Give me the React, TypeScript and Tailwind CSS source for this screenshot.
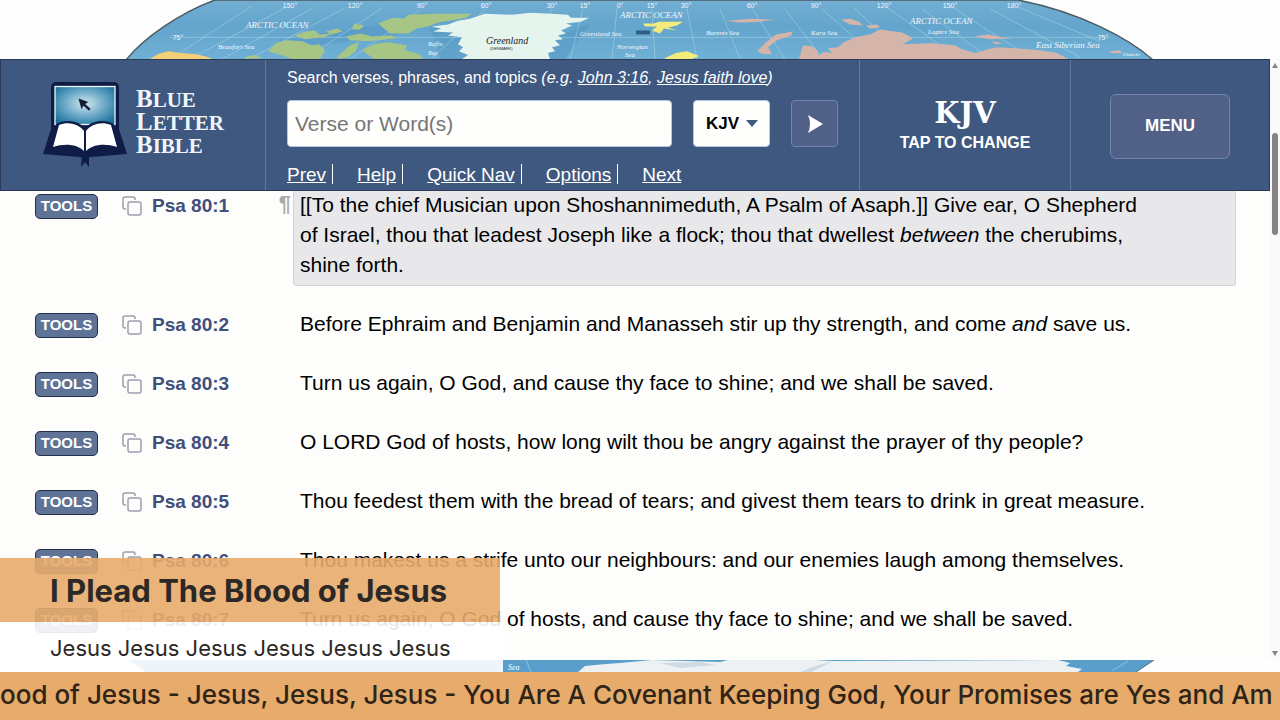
import { ReactNode } from 'react'

interface Verse { num: number; text: ReactNode; active?: boolean }

const VERSES: Verse[] = [
  { num: 1, active: true, text: <>[[To the chief Musician upon Shoshannimeduth, A Psalm of Asaph.]] Give ear, O Shepherd of Israel, thou that leadest Joseph like a flock; thou that dwellest <em>between</em> the cherubims, shine forth.</> },
  { num: 2, text: <>Before Ephraim and Benjamin and Manasseh stir up thy strength, and come <em>and</em> save us.</> },
  { num: 3, text: 'Turn us again, O God, and cause thy face to shine; and we shall be saved.' },
  { num: 4, text: 'O LORD God of hosts, how long wilt thou be angry against the prayer of thy people?' },
  { num: 5, text: 'Thou feedest them with the bread of tears; and givest them tears to drink in great measure.' },
  { num: 6, text: 'Thou makest us a strife unto our neighbours: and our enemies laugh among themselves.' },
  { num: 7, text: 'Turn us again, O God of hosts, and cause thy face to shine; and we shall be saved.' },
]

const NAV = ['Prev', 'Help', 'Quick Nav', 'Options', 'Next']

const DEGREES: [number, string][] = [
  [290, '150°'], [355, '120°'], [422, '90°'], [486, '60°'], [552, '30°'], [585, '15°'], [620, '0°'],
  [652, '15°'], [686, '30°'], [752, '60°'], [816, '90°'], [884, '120°'], [950, '150°'], [1014, '180°'],
]

const SEAS: [number, number, string, number][] = [
  [246, 28, 'ARCTIC   OCEAN', 9], [620, 18, 'ARCTIC   OCEAN', 9], [910, 24, 'ARCTIC   OCEAN', 9],
  [218, 50, 'Beaufort Sea', 7], [428, 47, 'Baffin', 6], [428, 56, 'Bay', 6], [580, 37, 'Greenland  Sea', 7],
  [617, 50, 'Norwegian', 7], [625, 58, 'Sea', 7], [706, 36, 'Barents Sea', 7], [811, 36, 'Kara Sea', 7],
  [928, 35, 'Laptev Sea', 7], [1036, 49, 'East Siberian Sea', 9], [1123, 57, 'Chukchi', 5],
]

const MERIDIANS = [
  'M252 6L128 88', 'M285 8L150 82', 'M313 8L184 82', 'M345 8L222 75', 'M382 8L290 70', 'M420 10L350 60', 'M486 9L420 70',
  'M552 9L530 60', 'M583 9L570 60', 'M617 8L612 60', 'M652 9L655 60', 'M687 9L697 60', 'M720 9L740 60', 'M752 9L785 60',
  'M785 9L823 60', 'M822 9L853 37', 'M854 8L900 52', 'M885 6L940 46', 'M922 9L985 56', 'M950 6L1030 58', 'M990 9L1080 58', 'M1018 7L1100 42',
]

function WorldMapTop() {
  return (
    <svg viewBox="0 0 1280 60" preserveAspectRatio="none" className="block h-full w-full" aria-hidden="true">
      <defs>
        <clipPath id="globe"><path d="M215 0C182 12 144 38 126 61H1153C1130 40 1080 12 1018 0Z" /></clipPath>
        <linearGradient id="ocean" x1="0" y1="0" x2="0" y2="1">
          <stop offset="0" stopColor="#72aed2" /><stop offset="0.45" stopColor="#64a5cd" /><stop offset="1" stopColor="#70b0d5" />
        </linearGradient>
      </defs>
      <g clipPath="url(#globe)">
        <path fill="url(#ocean)" d="M0 0H1280V60H0Z" />
        <path fill="#4e91bd" opacity=".4" d="M430 30L470 20 500 60H440ZM555 38L590 24 565 60H545ZM280 40L430 18 400 34 280 52Z" />
        <path fill="none" stroke="#b5d7ea" strokeWidth=".7" opacity=".7" d={MERIDIANS.join('') + 'M170 38H1110'} />
        <path fill="#f4cf78" d="M150 60L158 55 168 52 181 54 195 55 208 58 212 60Z" />
        <path fill="#a7c585" d="M268 52L276 44 286 41 302 42 312 46 319 45 325 51 320 60H292L284 57ZM362 51L374 45 388 43 407 46 405 51 419 55 423 60H374ZM295 36L305 32 315 31 319 35 333 34 324 38 305 40ZM326 32L337 29 343 32 331 35ZM346 37L361 34 372 37 391 36 397 39 368 42 350 41ZM354 24L364 26 360 30 352 30ZM378 24L393 18 404 19 408 15 438 14 472 14 466 18 438 23 428 27 417 29 408 34 390 34ZM338 57L350 46 359 43 356 52 348 58 338 60ZM245 58L255 56 262 59 245 60Z" />
        <path fill="#e6f4ee" d="M470 19L485 14 512 15 530 13 551 14 568 15 571 18 589 18 581 22 566 24 572 26 561 31 566 34 558 36 563 40 555 41 560 46 552 48 555 52 548 54 550 60H462L468 56 459 52 463 48 458 45 462 38 448 36 453 33 433 32 441 29 432 27 448 25 458 21Z" />
        <path fill="#f3ec7a" d="M643 24L654 24 659 22 683 22 677 26 668 28 677 31 664 29 660 34 652 31 657 27 645 27ZM665 59L676 54 687 52 699 57 692 60H665Z" />
        <path fill="#d5b5a9" d="M757 52L766 43 776 35 793 32 791 36 777 41 768 48 772 55 763 55ZM799 60L803 46 812 47 817 51 820 60ZM818 57L824 53 832 54 828 49 838 48 844 43 855 38 870 35 880 30 902 33 913 39 903 45 932 44 955 46 962 50 975 54 996 48 1015 49 1040 51 1057 54 1068 60H818ZM841 20L850 19 859 22 863 26 850 25ZM866 26L877 25 880 28 870 29ZM974 37L988 35 1002 38 1012 39 990 40ZM992 42L1004 44 995 45ZM1109 52L1120 51 1122 54 1112 54ZM726 21L740 20 750 19 775 20 760 22 740 23Z" />
        <path fill="#2f5f80" d="M636 31H650V35H636Z" />
        <g fill="#eef8fc" fontFamily="Liberation Sans" fontSize="7" textAnchor="middle">
          {DEGREES.map(([x, label]) => <text key={x} x={x} y="8">{label}</text>)}
          <text x="178" y="41">75°</text>
          <text x="1103" y="41">75°</text>
        </g>
        <g fill="#f2f8fb" fontFamily="Liberation Serif" fontStyle="italic">
          {SEAS.map(([x, y, label, size], i) => (
            <text key={i} x={x} y={y} fontSize={size}>{label}</text>
          ))}
        </g>
        <text x="486" y="45" fontFamily="Liberation Serif" fontStyle="italic" fontSize="10" fill="#222">Greenland</text>
        <text x="490" y="51" fontFamily="Liberation Sans" fontSize="4" fill="#222">(DENMARK)</text>
      </g>
      <path fill="none" stroke="#4c5a62" strokeWidth="1.4" d="M126 61C144 38 182 12 215 0H1018C1080 12 1130 40 1153 61" />
    </svg>
  )
}

function WorldMapBottom() {
  return (
    <svg viewBox="0 0 1280 12" preserveAspectRatio="none" className="block h-full w-full" aria-hidden="true">
      <path fill="#5a9fcb" d="M128 0H1154L1136 12H146Z" />
      <path fill="#edf1f4" d="M578 12L585 6 606 4 620 3 652 0 720 2 728 0H815L832 1 1058 0 1070 3 1066 6 1082 9 1078 12Z" />
      <path fill="#cfdbe4" d="M800 12L812 7 826 3 832 1 820 8 811 12ZM660 3L700 2 716 5 680 8Z" />
      <path stroke="#a5cde2" strokeWidth=".7" d="M526 0L531 12M1112 11L1128 1" />
      <path stroke="#4c6a7d" d="M1154 0L1136 12" />
      <text x="508" y="10" fontFamily="Liberation Serif" fontStyle="italic" fontSize="8" fill="#fff">Sea</text>
    </svg>
  )
}

function LogoMark() {
  return (
    <svg viewBox="0 0 84 86" className="h-[86px] w-[84px] shrink-0" aria-hidden="true">
      <defs>
        <radialGradient id="screen" cx=".5" cy=".45" r=".65">
          <stop offset="0" stopColor="#d4e8f0" /><stop offset=".5" stopColor="#6fabc9" /><stop offset="1" stopColor="#16709b" />
        </radialGradient>
      </defs>
      <rect x="8" y="0" width="68" height="52" rx="5" fill="#0f1c45" />
      <path fill="#0f1c45" d="M9 44H75L84 72 48 75 42 76 36 75 0 72Z" />
      <path fill="#0f1c45" d="M39 72H46V85L42 80 38 85Z" />
      <rect x="12" y="4.500" width="60" height="38" fill="url(#screen)" stroke="#eef6fa" strokeWidth="1.300" />
      <path fill="#0f1c45" d="M13 42C22 37 35 38 42 46C49 38 62 37 71 42L74 66H10Z" />
      <path fill="#fff" d="M16 43C25 39 36 42 41 49V69C34 62 22 61 10 65Z" />
      <path fill="#fff" d="M68 43C59 39 48 42 43 49V69C50 62 62 61 74 65Z" />
      <path fill="#111b33" stroke="#c8e0ea" strokeWidth=".5" d="M35 16L46 20 42.500 22 48 27 46 29 40.500 24 38.500 28Z" />
    </svg>
  )
}

function CopyIcon() {
  return (
    <svg viewBox="0 0 20 20" className="h-5 w-5" fill="none" stroke="#9b9fae" strokeWidth="1.500" aria-hidden="true">
      <path d="M4 13H3A2 2 0 0 1 1 11V3A2 2 0 0 1 3 1H11A2 2 0 0 1 13 3V4" />
      <rect x="6" y="6" width="13" height="13" rx="2" />
    </svg>
  )
}

function LogoWord({ word }: { word: string }) {
  return (
    <span className="block h-[23px] text-[25px] leading-[23px]">
      {word[0]}<span className="text-[21px] leading-none">{word.slice(1)}</span>
    </span>
  )
}

function Header() {
  return (
    <header className="relative grid h-[132px] shrink-0 grid-cols-[264px_1fr_211px_199px] border border-[#2c3a55] bg-[#3f587f] text-white">
      <a href="#home" className="flex items-center pl-[42px]">
        <LogoMark />
        <span className="pb-2 pl-[9px] font-['Liberation_Serif',serif] font-bold text-[#f0f5fb]">
          <LogoWord word="BLUE" />
          <LogoWord word="LETTER" />
          <LogoWord word="BIBLE" />
        </span>
      </a>

      <form className="flex flex-col border-l border-[#647ba1] pl-[21px]" onSubmit={e => e.preventDefault()}>
        <label htmlFor="search" className="mt-1.5 text-[16px] leading-6 whitespace-nowrap">
          Search verses, phrases, and topics <em>(e.g. <a href="#john" className="underline">John 3:16</a>, <a href="#faith" className="underline">Jesus faith love</a>)</em>
        </label>
        <div className="mt-2.5 flex">
          <input id="search" placeholder="Verse or Word(s)" className="h-[47px] w-[385px] rounded border border-[#b9c6e0] bg-[#fefefd] px-[7px] text-[21px] text-black placeholder:text-[#767676]" />
          <div className="relative ml-[21px]">
            <select aria-label="Translation" className="h-[47px] w-[77px] appearance-none rounded border border-[#b9c6e0] bg-[#fefefd] pl-3 text-[17px] font-bold text-black">
              <option>KJV</option>
            </select>
            <svg viewBox="0 0 12 7" className="pointer-events-none absolute top-5 right-3 h-[7px] w-3" aria-hidden="true"><path fill="#3f587f" d="M0 0H12L6 7Z" /></svg>
          </div>
          <button aria-label="Search" className="ml-[21px] flex h-[47px] w-[47px] items-center justify-center rounded border border-[#7485ac] bg-[#506087]">
            <svg viewBox="0 0 16 18" className="h-[18px] w-4" aria-hidden="true"><path fill="#fff" d="M1 0L16 9 1 18Q5 9 1 0Z" /></svg>
          </button>
        </div>
        <nav className="mt-[17px] flex text-[19px] leading-[22px]">
          {NAV.map((item, i) => (
            <span key={item} className="mr-6 flex">
              <a href={'#' + item} className="underline">{item}</a>
              {i < NAV.length - 1 && <span className="ml-1.5 h-5 w-px bg-white" />}
            </span>
          ))}
        </nav>
      </form>

      <button className="flex flex-col items-center justify-center border-l border-[#647ba1] pt-1">
        <span className="font-['DejaVu_Serif',serif] text-[29px] leading-8 font-bold">KJV</span>
        <span className="text-[16px] leading-7 font-bold">TAP TO CHANGE</span>
      </button>

      <div className="flex items-center justify-center border-l border-[#647ba1] pt-0.5">
        <button className="h-[65px] w-[120px] rounded-md border border-[#7485ac] bg-[#506087] text-[17px] font-bold">MENU</button>
      </div>
    </header>
  )
}

function VerseRow({ verse }: { verse: Verse }) {
  return (
    <div className="flex items-start">
      <div className="flex h-8 w-[293px] shrink-0 items-center pl-[35px]">
        <button className="h-[25px] w-[63px] rounded-[5px] border border-[#25304d] bg-[#5f7396] text-[15px] leading-5 font-bold text-white">TOOLS</button>
        <button aria-label="Copy verse" className="ml-6"><CopyIcon /></button>
        <a href={'#v' + verse.num} className="ml-2.5 text-[19px] font-bold text-[#3f4f7a]">Psa 80:{verse.num}</a>
        {verse.active && <span className="mr-0.5 ml-auto self-start text-[22px] leading-7 font-bold text-[#a9a9ab]">¶</span>}
      </div>
      <p className={'mr-[34px] flex-1 rounded-b border border-t-0 pr-[86px] pb-[5px] pl-1.5 text-[21px] leading-[30px] text-black ' + (verse.active ? 'border-[#cfd3d8] bg-[#e8e8eb]' : 'border-transparent')}>
        {verse.text}
      </p>
    </div>
  )
}

function LowerThird() {
  return (
    <section className="absolute bottom-12 left-0 w-[503px] font-[Inter,sans-serif] text-[#2c2826]">
      <h1 className="mr-[3px] flex h-16 items-center bg-[#e7ab6b]/90 pt-0.5 pl-[50px] text-[31px] font-bold whitespace-nowrap">
        I Plead The Blood of Jesus
      </h1>
      <p className="flex h-[50px] items-center bg-white/90 pt-0.5 pl-[50px] text-[22px] whitespace-nowrap">
        Jesus Jesus Jesus Jesus Jesus Jesus
      </p>
    </section>
  )
}

export default function App() {
  return (
    <div className="relative flex h-screen flex-col overflow-hidden bg-[#fefefe] font-['Liberation_Sans',Arial,sans-serif]">
      <div className="h-[59px] shrink-0"><WorldMapTop /></div>

      <div className="flex min-h-0 flex-1">
        <div className="flex min-w-0 flex-1 flex-col overflow-hidden bg-[#fdfdfb]">
          <Header />
          <main className="-mt-px flex flex-col gap-[23px]">
            {VERSES.map(v => <VerseRow key={v.num} verse={v} />)}
          </main>
        </div>
        <div className="flex w-2.5 shrink-0 flex-col items-center bg-[#fafafa] py-1" aria-hidden="true">
          <svg viewBox="0 0 6 5" className="h-[5px] w-1.5"><path fill="#858585" d="M0 5L3 0 6 5Z" /></svg>
          <div className="mt-[65px] h-[102px] w-1.5 rounded-full bg-[#858585]" />
          <svg viewBox="0 0 6 5" className="mt-auto h-[5px] w-1.5"><path fill="#858585" d="M0 0L3 5 6 0Z" /></svg>
        </div>
      </div>

      <div className="h-3 shrink-0"><WorldMapBottom /></div>

      <LowerThird />

      <footer className="flex h-12 shrink-0 items-center overflow-hidden bg-[#e7ab6b] pb-1 font-[Inter,sans-serif] text-[26px] font-medium whitespace-nowrap text-[#2e2417]">
        ood of Jesus - Jesus, Jesus, Jesus - You Are A Covenant Keeping God, Your Promises are Yes and Am
      </footer>
    </div>
  )
}
